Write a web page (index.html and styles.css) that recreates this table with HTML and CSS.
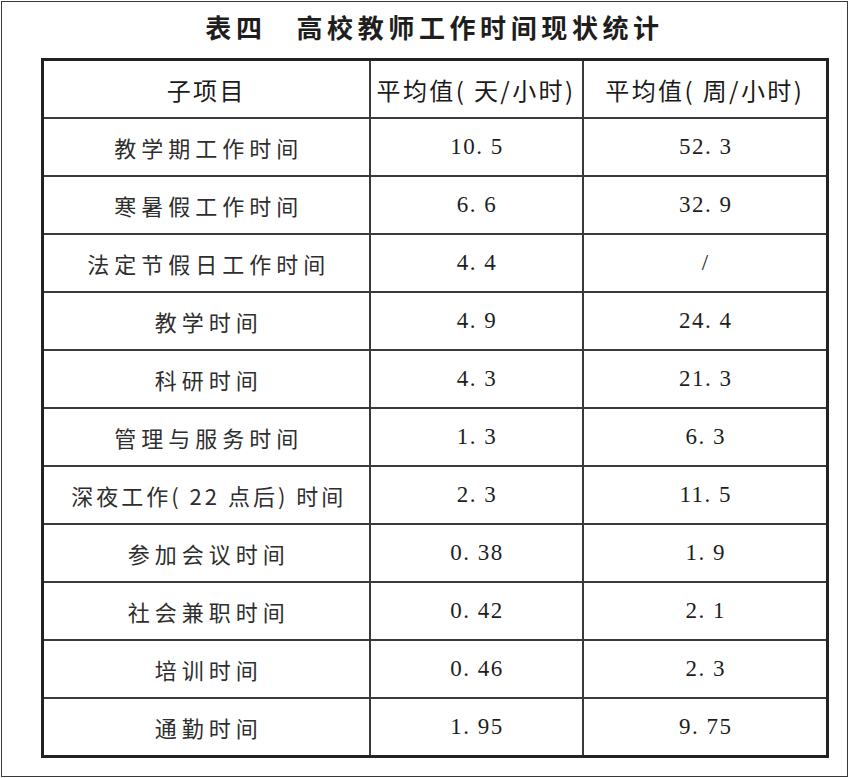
FILE: index.html
```html
<!DOCTYPE html>
<html lang="zh-CN">
<head>
<meta charset="utf-8">
<title>表四 高校教师工作时间现状统计</title>
<link rel="stylesheet" href="styles.css">
</head>
<body>
<div class="frame">
  <div class="wrap">
    <h1 class="title"><span class="title-no">表四</span><span class="title-text">高校教师工作时间现状统计</span></h1>
    <table class="stats">
      <colgroup>
        <col class="c1"><col class="c2"><col class="c3">
      </colgroup>
      <thead>
        <tr>
          <th class="head-cn">子项目</th>
          <th class="head-cn">平均值( 天/小时)</th>
          <th class="head-cn">平均值( 周/小时)</th>
        </tr>
      </thead>
      <tbody>
        <tr><td class="name">教学期工作时间</td><td class="num">10. 5</td><td class="num">52. 3</td></tr>
        <tr><td class="name">寒暑假工作时间</td><td class="num">6. 6</td><td class="num">32. 9</td></tr>
        <tr><td class="name">法定节假日工作时间</td><td class="num">4. 4</td><td class="num">/</td></tr>
        <tr><td class="name">教学时间</td><td class="num">4. 9</td><td class="num">24. 4</td></tr>
        <tr><td class="name">科研时间</td><td class="num">4. 3</td><td class="num">21. 3</td></tr>
        <tr><td class="name">管理与服务时间</td><td class="num">1. 3</td><td class="num">6. 3</td></tr>
        <tr><td class="name tight">深夜工作( 22 点后) 时间</td><td class="num">2. 3</td><td class="num">11. 5</td></tr>
        <tr><td class="name">参加会议时间</td><td class="num">0. 38</td><td class="num">1. 9</td></tr>
        <tr><td class="name">社会兼职时间</td><td class="num">0. 42</td><td class="num">2. 1</td></tr>
        <tr><td class="name">培训时间</td><td class="num">0. 46</td><td class="num">2. 3</td></tr>
        <tr><td class="name">通勤时间</td><td class="num">1. 95</td><td class="num">9. 75</td></tr>
      </tbody>
    </table>
  </div>
</div>
</body>
</html>
```

FILE: styles.css
```css
html, body {
  margin: 0;
  padding: 0;
  background: #ffffff;
}

.frame {
  box-sizing: border-box;
  width: 847px;
  height: 776px;
  margin: 1px 0 0 1px;
  border: 1px solid #3a3a3a;
  padding: 0 0 0 39px;
}

.wrap {
  width: 785px;
}

.title {
  margin: 0;
  height: 56px;
  display: flex;
  justify-content: center;
  align-items: center;
  padding: 0 0 7px 2px;
  box-sizing: border-box;
  font-family: "Noto Sans CJK SC", sans-serif;
  font-weight: 700;
  font-size: 26px;
  letter-spacing: 4.6px;
  color: #1e1e1e;
}

.title-no {
  margin-right: 30px;
}

.stats {
  border-collapse: collapse;
  width: 785px;
  table-layout: fixed;
  border: 3px solid #222;
}

.c1 { width: 327px; }
.c2 { width: 213px; }
.c3 { width: 245px; }

.stats th,
.stats td {
  height: 56px;
  padding: 0;
  text-align: center;
  vertical-align: middle;
  border: 2px solid #3a3a3a;
}

.head-cn {
  font-family: "Noto Sans CJK SC", sans-serif;
  font-weight: 400;
  font-size: 24px;
  letter-spacing: 2.4px;
  color: #1a1a1a;
  padding-left: 2px;
}

.name {
  font-family: "Noto Sans CJK SC", sans-serif;
  font-weight: 400;
  font-size: 22px;
  letter-spacing: 5px;
  color: #2e2e2e;
  padding-left: 5px !important;
}

.name.tight {
  letter-spacing: 3px;
}

.num {
  font-family: "Liberation Serif", "Times New Roman", serif;
  font-size: 23px;
  letter-spacing: 1.5px;
  color: #1e1e1e;
  padding-left: 2px !important;
}
```
